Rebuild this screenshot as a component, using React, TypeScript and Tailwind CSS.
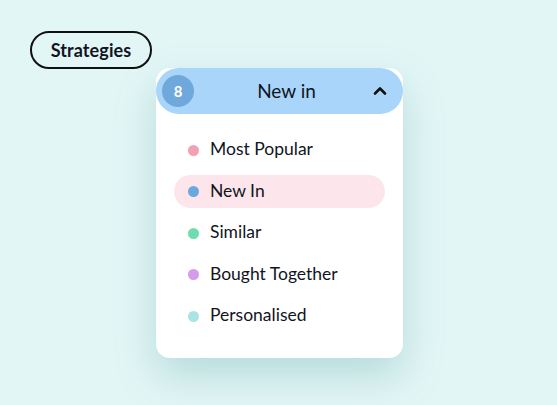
import React from 'react';

const strategies = [
  { label: 'Most Popular', dot: 'bg-[#f4a0b3]' },
  { label: 'New In', dot: 'bg-[#6aa8dd]', active: true },
  { label: 'Similar', dot: 'bg-[#6fdcb0]' },
  { label: 'Bought Together', dot: 'bg-[#d49cea]' },
  { label: 'Personalised', dot: 'bg-[#a8e4e1]' },
];

export default function App() {
  return (
    <div className="w-[557px] h-[405px] bg-[#e3f6f6] font-['Lato',sans-serif] text-[#111522] overflow-hidden">
      <div className="pl-[30px] pt-[31px]">
        <div className="w-[122px] h-[38px] rounded-full border-2 border-[#111] flex items-center justify-center text-[18px] font-bold tracking-[0.1px] pt-[1px]">
          Strategies
        </div>
      </div>

      <div className="ml-[156px] -mt-[1px] w-[247px] h-[290px] bg-white rounded-[14px] shadow-[0_18px_40px_rgba(70,150,150,0.28)] flex flex-col">
        <div className="h-[46px] rounded-full bg-[#a9d5fa] flex items-center px-[6px]">
          <div className="w-[32px] h-[32px] rounded-full bg-[#6fa9dc] text-white font-bold text-[15px] flex items-center justify-center">
            8
          </div>
          <div className="flex-1 text-center text-[19px] pl-[6px]">New in</div>
          <svg width="14" height="10" viewBox="0 0 14 10" className="mr-[10px]">
            <path d="M2 7.5 L7 2.5 L12 7.5" fill="none" stroke="#111" strokeWidth="2.6" strokeLinecap="round" strokeLinejoin="round" />
          </svg>
        </div>

        <div className="flex flex-col gap-[8.5px] pt-[19px] px-[18px]">
          {strategies.map((s) => (
            <div
              key={s.label}
              className={`h-[33px] rounded-full flex items-center pl-[14px] ${s.active ? 'bg-[#fde6eb]' : ''}`}
            >
              <span className={`w-[11px] h-[11px] rounded-full mt-[1px] ${s.dot}`} />
              <span className="ml-[11px] text-[17.5px]">{s.label}</span>
            </div>
          ))}
        </div>
      </div>
    </div>
  );
}
